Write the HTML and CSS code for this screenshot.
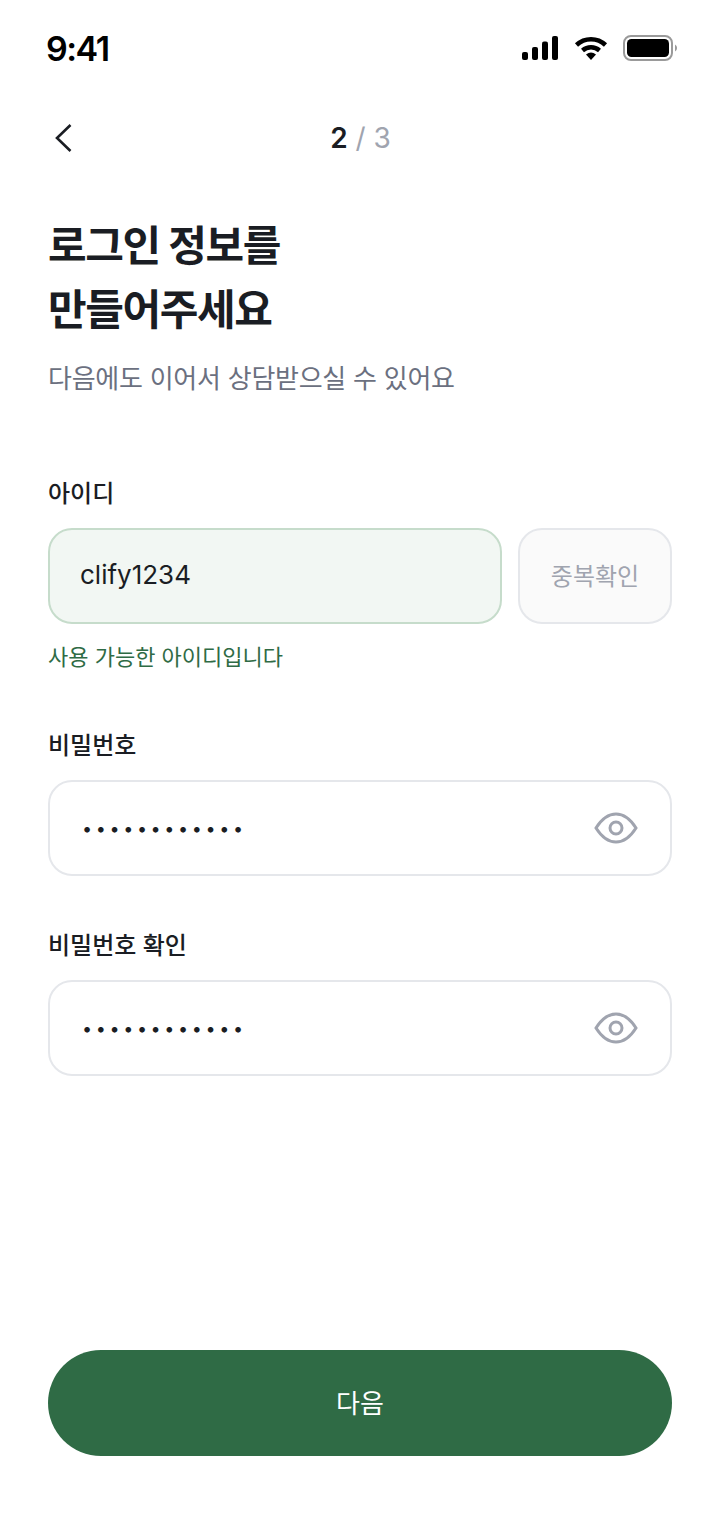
FILE: index.html
```html
<!DOCTYPE html>
<html lang="ko">
<head>
    <meta charset="UTF-8">
    <meta name="viewport" content="width=device-width, initial-scale=1.0">
    <title>로그인 정보</title>
    <link rel="stylesheet" href="styles.css">
</head>
<body>
    <div class="screen">
        <div class="status-bar">
            <span class="time">9:41</span>
            <div class="status-icons">
                <svg width="36" height="24" viewBox="0 0 36 24">
                    <rect x="0" y="16" width="6" height="8" rx="2" fill="#000"/>
                    <rect x="10" y="11" width="6" height="13" rx="2" fill="#000"/>
                    <rect x="20" y="5.500" width="6" height="18.500" rx="2" fill="#000"/>
                    <rect x="30" y="0" width="6" height="24" rx="2" fill="#000"/>
                </svg>
                <svg width="34" height="24" viewBox="0 0 34 24">
                    <path d="M2.500 9 A21 21 0 0 1 31.500 9" fill="none" stroke="#000" stroke-width="4.500"/>
                    <path d="M8.500 14.500 A13 13 0 0 1 25.500 14.500" fill="none" stroke="#000" stroke-width="4.500"/>
                    <path d="M12 18.500 A8 8 0 0 1 22 18.500 L17 24 Z" fill="#000"/>
                </svg>
                <svg width="56" height="26" viewBox="0 0 56 26">
                    <rect x="1" y="1" width="48" height="24" rx="7" fill="none" stroke="#9a9a9a" stroke-width="2"/>
                    <rect x="4" y="4" width="42" height="18" rx="4.500" fill="#000"/>
                    <path d="M52 9.500 A4 4 0 0 1 52 16.500 Z" fill="#9a9a9a"/>
                </svg>
            </div>
        </div>

        <div class="nav">
            <button class="back">
                <svg width="20" height="30" viewBox="0 0 20 30">
                    <path d="M16.500 2 L3 15 L16.500 28" fill="none" stroke="#1a1d23" stroke-width="2.600"/>
                </svg>
            </button>
            <div class="steps"><b>2</b><span class="steps-rest"> / 3</span></div>
        </div>

        <div class="content">
            <h1>로그인 정보를<br>만들어주세요</h1>
            <p class="sub">다음에도 이어서 상담받으실 수 있어요</p>

            <div class="field field-id">
                <label>아이디</label>
                <div class="id-row">
                    <div class="input input-ok">clify1234</div>
                    <button class="check">중복확인</button>
                </div>
                <p class="hint">사용 가능한 아이디입니다</p>
            </div>

            <div class="field">
                <label>비밀번호</label>
                <div class="input">
                    <span class="dots">••••••••••••</span>
                    <svg class="eye" width="44" height="34" viewBox="0 0 44 34">
                        <path d="M2 17 C8 7.500 14 3 22 3 C30 3 36 7.500 42 17 C36 26.500 30 31 22 31 C14 31 8 26.500 2 17 Z" fill="none" stroke="#a0a4af" stroke-width="3"/>
                        <circle cx="22" cy="17" r="6" fill="none" stroke="#a0a4af" stroke-width="3"/>
                    </svg>
                </div>
            </div>

            <div class="field">
                <label>비밀번호 확인</label>
                <div class="input">
                    <span class="dots">••••••••••••</span>
                    <svg class="eye" width="44" height="34" viewBox="0 0 44 34">
                        <path d="M2 17 C8 7.500 14 3 22 3 C30 3 36 7.500 42 17 C36 26.500 30 31 22 31 C14 31 8 26.500 2 17 Z" fill="none" stroke="#a0a4af" stroke-width="3"/>
                        <circle cx="22" cy="17" r="6" fill="none" stroke="#a0a4af" stroke-width="3"/>
                    </svg>
                </div>
            </div>
        </div>

        <div class="footer">
            <button class="next">다음</button>
        </div>
    </div>
</body>
</html>
```

FILE: styles.css
```css
* {
    box-sizing: border-box;
}

body {
    margin: 0;
    background-color: #fff;
    color: #1a1d23;
    font-family: Inter, "Noto Sans CJK KR", sans-serif;
}

button {
    border: none;
    background: none;
    padding: 0;
    font: inherit;
}

.screen {
    width: 720px;
    height: 1520px;
    display: flex;
    flex-direction: column;
}

.status-bar {
    height: 96px;
    padding: 0 41px 0 46px;
    display: flex;
    align-items: center;
    justify-content: space-between;
}

.time {
    font-size: 34px;
    font-weight: 600;
    color: #000;
    letter-spacing: -1.5px;
}

.status-icons {
    display: flex;
    align-items: center;
    gap: 15.5px;
}

.nav {
    height: 84px;
    padding: 0 48px;
    position: relative;
    display: flex;
    align-items: center;
    justify-content: center;
}

.back {
    position: absolute;
    left: 54px;
    top: 27px;
    height: 30px;
}

.steps {
    font-size: 28px;
    font-weight: 400;
    padding-left: 1px;
}

.steps b {
    font-weight: 600;
}

.steps-rest {
    color: #a0a4af;
}

.content {
    padding: 34px 48px 0;
    flex: 1;
}

h1 {
    margin: 0;
    font-size: 42px;
    line-height: 64px;
    font-weight: 700;
    letter-spacing: -1.4px;
}

.sub {
    margin: 17px 0 0;
    font-size: 26px;
    line-height: 40px;
    color: #6b7080;
    letter-spacing: -0.26px;
}

.field {
    margin-top: 50px;
}

.field-id {
    margin-top: 75px;
    padding-bottom: 2px;
}

label {
    display: block;
    font-size: 24px;
    line-height: 40px;
    font-weight: 500;
    margin-bottom: 14px;
}

.id-row {
    display: flex;
    gap: 16px;
}

.input {
    flex: 1;
    height: 96px;
    border: 2px solid #e5e7eb;
    border-radius: 24px;
    padding: 0 30px;
    display: flex;
    align-items: center;
    justify-content: space-between;
    font-size: 26px;
}

.input-ok {
    background-color: #f2f7f3;
    border-color: #c6dccb;
    padding-bottom: 3px;
}

.check {
    width: 154px;
    height: 96px;
    border: 2px solid #e5e7eb;
    border-radius: 24px;
    background-color: #fafafa;
    color: #a0a4af;
    font-size: 24px;
    padding-bottom: 3px;
}

.hint {
    margin: 16px 0 0;
    font-size: 22px;
    line-height: 34px;
    color: #2f6b45;
}

.dots {
    margin-left: 2px;
    font-size: 18px;
    letter-spacing: 3.6px;
}

.eye {
    margin-right: 2px;
}

.footer {
    padding: 0 48px 64px;
}

.next {
    width: 100%;
    height: 106px;
    border-radius: 53px;
    background-color: #2f6b45;
    color: #fff;
    font-size: 26px;
    font-weight: 400;
    padding-bottom: 4px;
}
```
